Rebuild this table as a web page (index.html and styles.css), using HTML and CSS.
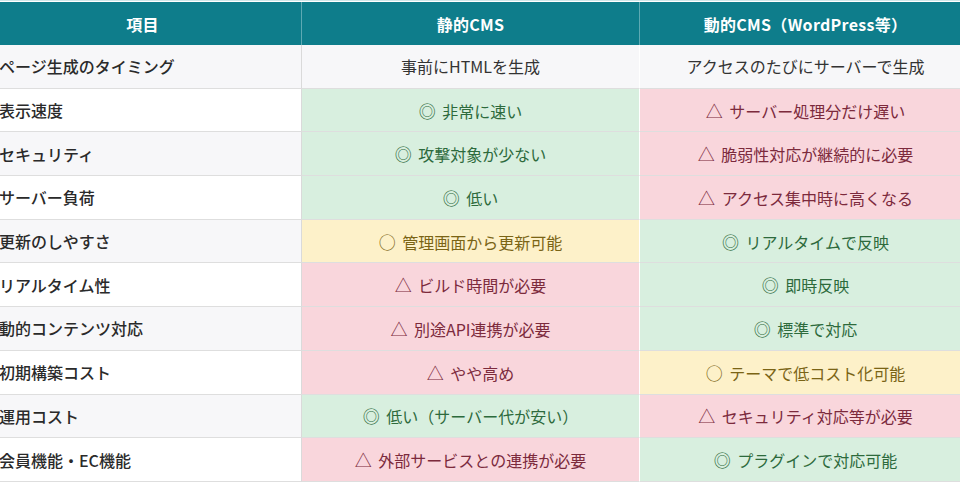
FILE: index.html
```html
<!DOCTYPE html>
<html lang="ja">
<head>
<meta charset="utf-8">
<link rel="stylesheet" href="styles.css">
</head>
<body>
<div class="wrap">
<table class="cmp">
  <thead>
    <tr><th>項目</th><th>静的CMS</th><th>動的CMS（WordPress等）</th></tr>
  </thead>
  <tbody>
    <tr class="odd"><td class="label">ページ生成のタイミング</td><td class="neutral">事前にHTMLを生成</td><td class="neutral">アクセスのたびにサーバーで生成</td></tr>
    <tr><td class="label">表示速度</td><td class="good"><span class="mark">◎</span> 非常に速い</td><td class="bad"><span class="mark">△</span> サーバー処理分だけ遅い</td></tr>
    <tr class="odd"><td class="label">セキュリティ</td><td class="good"><span class="mark">◎</span> 攻撃対象が少ない</td><td class="bad"><span class="mark">△</span> 脆弱性対応が継続的に必要</td></tr>
    <tr><td class="label">サーバー負荷</td><td class="good"><span class="mark">◎</span> 低い</td><td class="bad"><span class="mark">△</span> アクセス集中時に高くなる</td></tr>
    <tr class="odd"><td class="label">更新のしやすさ</td><td class="fair"><span class="mark">○</span> 管理画面から更新可能</td><td class="good"><span class="mark">◎</span> リアルタイムで反映</td></tr>
    <tr><td class="label">リアルタイム性</td><td class="bad"><span class="mark">△</span> ビルド時間が必要</td><td class="good"><span class="mark">◎</span> 即時反映</td></tr>
    <tr class="odd"><td class="label">動的コンテンツ対応</td><td class="bad"><span class="mark">△</span> 別途API連携が必要</td><td class="good"><span class="mark">◎</span> 標準で対応</td></tr>
    <tr><td class="label">初期構築コスト</td><td class="bad"><span class="mark">△</span> やや高め</td><td class="fair"><span class="mark">○</span> テーマで低コスト化可能</td></tr>
    <tr class="odd"><td class="label">運用コスト</td><td class="good"><span class="mark">◎</span> 低い（サーバー代が安い）</td><td class="bad"><span class="mark">△</span> セキュリティ対応等が必要</td></tr>
    <tr><td class="label">会員機能・EC機能</td><td class="bad"><span class="mark">△</span> 外部サービスとの連携が必要</td><td class="good"><span class="mark">◎</span> プラグインで対応可能</td></tr>
  </tbody>
</table>
</div>
</body>
</html>
```
FILE: styles.css
```css
html, body {
  margin: 0;
  padding: 0;
  background: #ffffff;
  overflow: hidden;
}
.wrap {
  width: 960px;
  height: 486px;
  overflow: hidden;
  padding-top: 1px;
  border-top: 1px solid #cfe6e9;
}
.cmp {
  margin-left: -16px;
  width: 988px;
  border-collapse: separate;
  border-spacing: 0;
  table-layout: fixed;
  font-family: "Noto Sans CJK JP", "Noto Sans", sans-serif;
  font-size: 16px;
  color: #333333;
}
.cmp th:nth-child(1) { width: 317px; }
.cmp th:nth-child(2) { width: 337px; }
.cmp th {
  height: 43px;
  padding: 0;
  background: #0e7d8b;
  color: #ffffff;
  font-weight: 700;
  font-size: 16px;
  letter-spacing: 0.3px;
  text-align: center;
  border-right: 1px solid #5ea9b3;
}
.cmp td {
  height: 42.7px;
  padding: 0;
  text-align: center;
  border-bottom: 1px solid #dedede;
  border-right: 1px solid #ffffff;
}
.cmp td.label {
  text-align: left;
  padding-left: 15px;
  font-weight: 500;
  color: #2a2a2a;
  background: #ffffff;
  border-right: 1px solid #dadada;
}
.mark {
  display: inline-block;
  font-size: 17px;
  margin-right: 3px;
}
.cmp tr.odd td.label { background: #f7f7f9; }
.cmp td.neutral { background: #f7f7f9; color: #333333; }
.cmp td.good { background: #d8efdf; color: #2d6a3c; }
.cmp td.bad { background: #f9d6dc; color: #7c2a3c; }
.cmp td.fair { background: #fdf1c9; color: #7a6415; }
```
